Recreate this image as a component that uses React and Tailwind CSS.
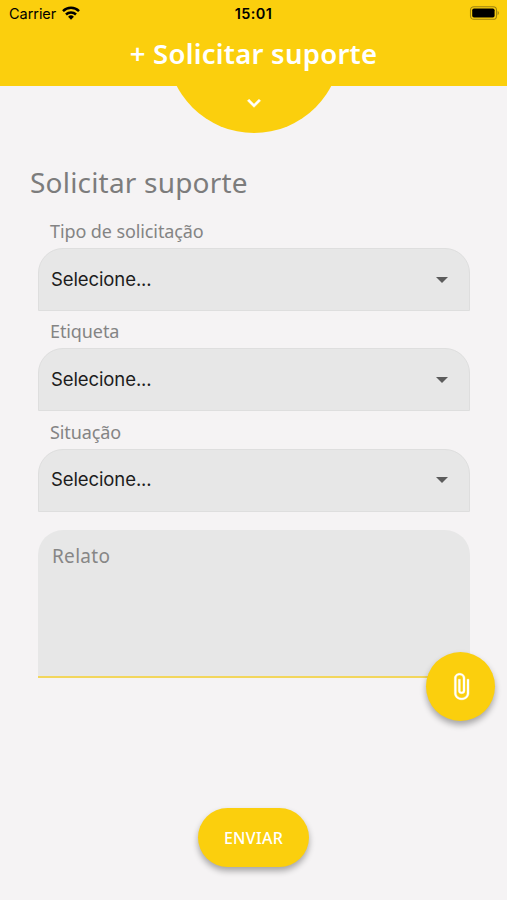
import React from "react";

function StatusBar() {
  return (
    <div className="flex h-7 items-center justify-between pl-[9px] pr-[7px] text-black">
      <div className="flex w-[120px] items-center gap-[6px]">
        <span className="font-['Inter',sans-serif] text-[14.5px] leading-7 tracking-[-0.05px]">Carrier</span>
        <svg className="-mt-[2px] h-[14px] w-[18px]" viewBox="0 0 18 14" fill="none" stroke="currentColor" strokeWidth="2.5">
          <path d="M1 5.1a11.4 11.4 0 0 1 16 0" />
          <path d="M4 8.5a7.2 7.2 0 0 1 10 0" />
          <path d="M9 13.7 6.1 10.8a4.1 4.1 0 0 1 5.8 0z" fill="currentColor" stroke="none" />
        </svg>
      </div>
      <span className="font-['Inter',sans-serif] text-[14.5px] font-semibold leading-7 tracking-[0.4px]">15:01</span>
      <div className="flex w-[122px] justify-end">
        <svg className="-mt-[2px] h-[14px] w-[31px]" viewBox="0 0 31 14">
          <rect x="1.5" y="0.7" width="26" height="12.6" rx="3.4" fill="none" stroke="#9d8410" strokeWidth="1.1" />
          <rect x="3.2" y="2.5" width="22.4" height="9" rx="1.8" fill="#000" />
          <path d="M28.6 4.8a2.5 2.5 0 0 1 0 4.4z" fill="#9d8410" />
        </svg>
      </div>
    </div>
  );
}

function Header() {
  return (
    <header className="h-[132px] shrink-0">
      <div className="h-[86px] bg-[#fbcf0d]">
        <StatusBar />
        <h1 className="text-center font-['Noto_Sans',sans-serif] text-[27.5px] font-semibold leading-[52px] tracking-[0.25px] text-white">
          + Solicitar suporte
        </h1>
      </div>
      <div className="relative mx-auto h-[47px] w-[174px] overflow-hidden">
        <div className="absolute bottom-0 left-0 h-[174px] w-[174px] rounded-full bg-[#fbcf0d]" />
        <svg className="absolute left-[74px] top-[4px] h-[26px] w-[26px]" viewBox="0 0 24 24" fill="#fff" stroke="#fff" strokeWidth="0.6">
          <path d="M16.59 8.59 12 13.17 7.41 8.59 6 10l6 6 6-6z" />
        </svg>
      </div>
    </header>
  );
}

function SelectField({ label }) {
  return (
    <div className="h-[100.3px]">
      <div className="h-[28px] pl-[12px] font-['Noto_Sans',sans-serif] text-[18px] leading-[22px] tracking-[-0.1px] text-[#848484]">
        {label}
      </div>
      <div className="flex h-[63px] items-center justify-between rounded-t-[25px] border border-[#dedede] bg-[#e7e7e7] pl-[12px] pr-[21px]">
        <span className="font-['Inter',sans-serif] text-[18.5px] tracking-[-0.1px] text-[#1c1c1c]">Selecione...</span>
        <svg className="h-[6px] w-[12px]" viewBox="0 0 12 6" fill="#5c5c5c">
          <path d="M0 0h12L6 6z" />
        </svg>
      </div>
    </div>
  );
}

export default function App() {
  return (
    <main className="relative flex h-[900px] w-[507px] flex-col overflow-hidden bg-[#f5f3f4]">
      <Header />
      <h2 className="mt-[30px] h-[58px] pl-[30px] font-['Noto_Sans',sans-serif] text-[28px] leading-[40px] tracking-[0.2px] text-[#7c7c7c]">
        Solicitar suporte
      </h2>
      <section className="ml-[38px] w-[432px]">
        <SelectField label="Tipo de solicitação" />
        <SelectField label="Etiqueta" />
        <SelectField label="Situação" />
        <div className="mt-[9.1px] h-[148px] overflow-hidden rounded-t-[25px] border-b-2 border-[#f2d65c] bg-[#e7e7e7] pl-[14px] pt-[12px] font-['Noto_Sans',sans-serif] text-[19px] leading-[28px] tracking-[0.3px] text-[#868686]">
          Relato
        </div>
      </section>
      <button className="absolute left-[426px] top-[652px] flex h-[69px] w-[69px] items-center justify-center rounded-full bg-[#fbcf0d] shadow-[0_4px_6px_rgba(0,0,0,0.32)]">
        <svg className="h-[29px] w-[32px]" viewBox="0 0 24 24" preserveAspectRatio="none" fill="#fff" stroke="#fff" strokeWidth="0.3">
          <path d="M16.5 6v11.5c0 2.21-1.79 4-4 4s-4-1.79-4-4V5a2.5 2.5 0 0 1 5 0v10.5c0 .55-.45 1-1 1s-1-.45-1-1V6H10v9.5a2.5 2.5 0 0 0 5 0V5c0-2.21-1.79-4-4-4S7 2.79 7 5v12.5c0 3.04 2.46 5.5 5.5 5.5s5.5-2.46 5.5-5.5V6h-1.5z" />
        </svg>
      </button>
      <button className="mx-auto mb-[33px] mt-auto h-[59px] w-[111px] shrink-0 rounded-full bg-[#fbcf0d] font-['Noto_Sans',sans-serif] text-[16px] font-medium tracking-[0.3px] text-white shadow-[0_4px_6px_rgba(0,0,0,0.32)]">
        ENVIAR
      </button>
    </main>
  );
}
